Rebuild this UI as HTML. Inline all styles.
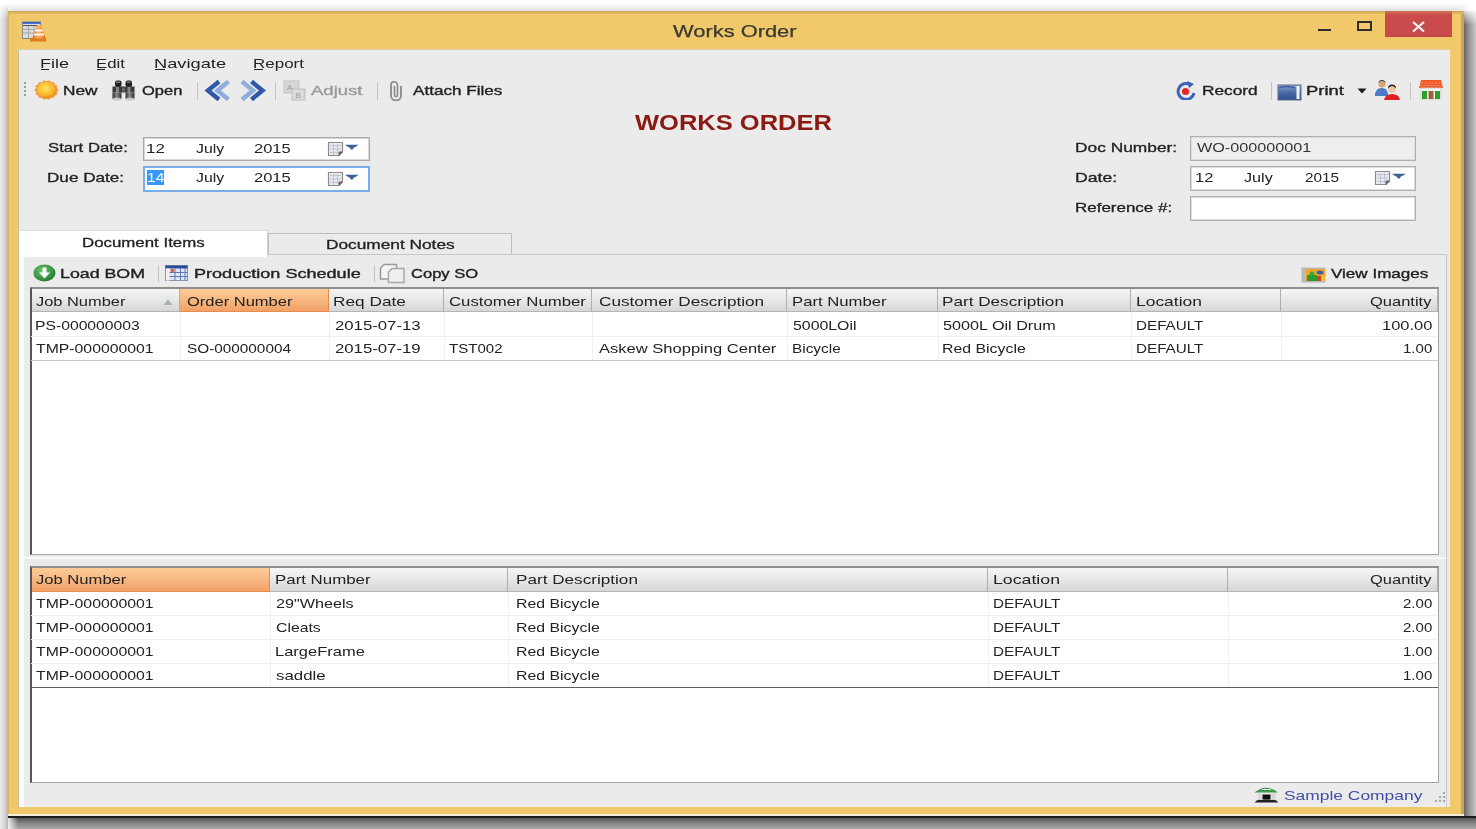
<!DOCTYPE html>
<html><head><meta charset="utf-8"><style>
html,body{margin:0;padding:0;width:1476px;height:829px;overflow:hidden;background:#fff;position:relative}
.t{position:absolute;white-space:pre;font-family:"Liberation Sans", sans-serif;transform-origin:0 0}
</style></head><body>
<div style="position:absolute;left:8px;top:11px;width:1456px;height:805px;box-shadow:0 0 9px 1px rgba(0,0,0,0.22)"></div>
<div style="position:absolute;left:1464px;top:11px;width:12px;height:818px;background:linear-gradient(90deg,#646464,#9a9a9a 45%,#c8c8c8);-webkit-mask-image:linear-gradient(rgba(0,0,0,0.15),#000 14px)"></div>
<div style="position:absolute;left:8px;top:816px;width:1468px;height:13px;background:linear-gradient(#1c1c1c,#1c1c1c 1.5px,#5a5a5a 2.5px,#8a8a8a 60%,#a8a8a8)"></div>
<div style="position:absolute;left:8px;top:818px;width:10px;height:11px;background:linear-gradient(90deg,rgba(255,255,255,0.85),rgba(255,255,255,0))"></div>
<div style="position:absolute;left:0;top:4px;width:8px;height:825px;background:linear-gradient(90deg,#ececec,#d8d8d8 55%,#b4b4b4);-webkit-mask-image:linear-gradient(rgba(0,0,0,0),#000 16px)"></div>
<div style="position:absolute;left:8px;top:11px;width:1456px;height:805px;background:#F1C96B;"></div>
<div style="position:absolute;left:8px;top:11px;width:1456px;height:3px;background:linear-gradient(#cfa955,#d6b05a 60%,#e8c064);"></div>
<div style="position:absolute;left:1461px;top:14px;width:3px;height:802px;background:#c9a650;"></div>
<div style="position:absolute;left:8px;top:14px;width:1px;height:801px;background:#dcb458;"></div>
<div style="position:absolute;left:8px;top:814px;width:1456px;height:2px;background:#f4ecd8;"></div>
<div style="position:absolute;left:18px;top:49px;width:1432px;height:758px;background:#EBEBEB;"></div>
<div style="position:absolute;left:18px;top:49px;width:1px;height:758px;background:#c8bc98;"></div>
<div style="position:absolute;left:18px;top:49px;width:1432px;height:1px;background:#dcd0a8;"></div>
<div style="position:absolute;left:1385px;top:11px;width:67px;height:26px;background:linear-gradient(#d0784e,#cc5a4c 3px,#C94B4C 4px,#C94B4C 24px,#c04446);"></div>
<svg style="position:absolute;left:1411px;top:21px" width="15" height="12" viewBox="0 0 15 12"><path d="M2 1 L13 10.5 M13 1 L2 10.5" stroke="#fff" stroke-width="2"/></svg>
<div style="position:absolute;left:1357px;top:21px;width:15px;height:10px;border:2px solid #2d2d2d;box-sizing:border-box;"></div>
<div style="position:absolute;left:1318px;top:29px;width:13px;height:2px;background:#2d2d2d;"></div>
<div style="position:absolute;left:197px;top:82px;width:1px;height:18px;background:#c4c4c4;"></div>
<div style="position:absolute;left:275px;top:82px;width:1px;height:18px;background:#c4c4c4;"></div>
<div style="position:absolute;left:377px;top:82px;width:1px;height:18px;background:#c4c4c4;"></div>
<div style="position:absolute;left:1271px;top:82px;width:1px;height:18px;background:#c4c4c4;"></div>
<div style="position:absolute;left:1410px;top:82px;width:1px;height:18px;background:#c4c4c4;"></div>
<div style="position:absolute;left:143px;top:137px;width:227px;height:24px;background:#fff;border:1px solid #a8a8a8;box-shadow:inset 0 0 0 1px #d8d8d8;box-sizing:border-box;"></div>
<div style="position:absolute;left:143px;top:166px;width:227px;height:26px;background:#fff;border:2px solid #79aee6;box-sizing:border-box;"></div>
<div style="position:absolute;left:1190px;top:136px;width:226px;height:25px;background:#EEEEEE;border:1px solid #b0b0b0;box-shadow:inset 0 0 0 1px #dcdcdc;box-sizing:border-box;"></div>
<div style="position:absolute;left:1190px;top:166px;width:226px;height:25px;background:#fff;border:1px solid #b0b0b0;box-shadow:inset 0 0 0 1px #dcdcdc;box-sizing:border-box;"></div>
<div style="position:absolute;left:1190px;top:196px;width:226px;height:25px;background:#fff;border:1px solid #b0b0b0;box-shadow:inset 0 0 0 1px #dcdcdc;box-sizing:border-box;"></div>
<div style="position:absolute;left:147px;top:170px;width:17px;height:15px;background:#3399ff;"></div>
<svg style="position:absolute;left:327px;top:141px" width="33" height="16" viewBox="0 0 33 16"><path d="M1.5 1.5 H15.5 V11 L12 14.5 H1.5 Z" fill="#e8eaee" stroke="#8e8a88" stroke-width="1.2" stroke-linejoin="round"/><path d="M3 4.5h11M3 8h11M3 11.5h8M6.5 3v11M10.5 3v10" stroke="#bcc4d0" stroke-width="1"/><path d="M12 14.5 L12 11 L15.5 11" fill="#6a6060" stroke="#6a6060" stroke-width="1"/><path d="M18 3.8 L31.5 3.8 Q30 5.5 27 6.5 L25.5 8.6 L24 8.6 L22.5 6.5 Q19.5 5.5 18 3.8 Z" fill="#3e5f98"/></svg>
<svg style="position:absolute;left:327px;top:171px" width="33" height="16" viewBox="0 0 33 16"><path d="M1.5 1.5 H15.5 V11 L12 14.5 H1.5 Z" fill="#e8eaee" stroke="#8e8a88" stroke-width="1.2" stroke-linejoin="round"/><path d="M3 4.5h11M3 8h11M3 11.5h8M6.5 3v11M10.5 3v10" stroke="#bcc4d0" stroke-width="1"/><path d="M12 14.5 L12 11 L15.5 11" fill="#6a6060" stroke="#6a6060" stroke-width="1"/><path d="M18 3.8 L31.5 3.8 Q30 5.5 27 6.5 L25.5 8.6 L24 8.6 L22.5 6.5 Q19.5 5.5 18 3.8 Z" fill="#3e5f98"/></svg>
<svg style="position:absolute;left:1374px;top:170px" width="33" height="16" viewBox="0 0 33 16"><path d="M1.5 1.5 H15.5 V11 L12 14.5 H1.5 Z" fill="#e8eaee" stroke="#8e8a88" stroke-width="1.2" stroke-linejoin="round"/><path d="M3 4.5h11M3 8h11M3 11.5h8M6.5 3v11M10.5 3v10" stroke="#bcc4d0" stroke-width="1"/><path d="M12 14.5 L12 11 L15.5 11" fill="#6a6060" stroke="#6a6060" stroke-width="1"/><path d="M18 3.8 L31.5 3.8 Q30 5.5 27 6.5 L25.5 8.6 L24 8.6 L22.5 6.5 Q19.5 5.5 18 3.8 Z" fill="#3e5f98"/></svg>
<div style="position:absolute;left:20px;top:254px;width:1427px;height:553px;background:#EBEBEB;border-top:1px solid #c8c8c8;border-right:1px solid #c8c8c8;box-sizing:border-box;"></div>
<div style="position:absolute;left:19px;top:256px;width:5px;height:551px;background:#fbfbfb;"></div>
<div style="position:absolute;left:19px;top:230px;width:249px;height:27px;background:#fff;border-top:1px solid #dedede;border-right:1px solid #d4d4d4;box-sizing:border-box;"></div>
<div style="position:absolute;left:268px;top:233px;width:244px;height:21px;background:#EBEBEB;border:1px solid #bdbdbd;border-bottom:none;box-sizing:border-box;"></div>
<div style="position:absolute;left:158px;top:265px;width:1px;height:17px;background:#c4c4c4;"></div>
<div style="position:absolute;left:374px;top:265px;width:1px;height:17px;background:#c4c4c4;"></div>
<div style="position:absolute;left:30px;top:287px;width:1409px;height:268px;background:#fff;border:1px solid #a4a4a4;border-top:2px solid #8e8e8e;border-left:2px solid #555;box-sizing:border-box;"></div>
<div style="position:absolute;left:32px;top:289px;width:148px;height:23px;background:linear-gradient(#f6f6f6,#e4e4e4 60%,#d6d6d6);border-right:1px solid #b0b0b0;border-bottom:1px solid #b4b4b4;box-sizing:border-box;"></div>
<div style="position:absolute;left:180px;top:289px;width:149px;height:23px;background:linear-gradient(#fccd97,#f7b882 50%,#f1a067);border-right:1px solid #ec8a4a;border-bottom:1px solid #e98c50;box-sizing:border-box;"></div>
<div style="position:absolute;left:329px;top:289px;width:115px;height:23px;background:linear-gradient(#f6f6f6,#e4e4e4 60%,#d6d6d6);border-right:1px solid #b0b0b0;border-bottom:1px solid #b4b4b4;box-sizing:border-box;"></div>
<div style="position:absolute;left:444px;top:289px;width:148px;height:23px;background:linear-gradient(#f6f6f6,#e4e4e4 60%,#d6d6d6);border-right:1px solid #b0b0b0;border-bottom:1px solid #b4b4b4;box-sizing:border-box;"></div>
<div style="position:absolute;left:592px;top:289px;width:195px;height:23px;background:linear-gradient(#f6f6f6,#e4e4e4 60%,#d6d6d6);border-right:1px solid #b0b0b0;border-bottom:1px solid #b4b4b4;box-sizing:border-box;"></div>
<div style="position:absolute;left:787px;top:289px;width:151px;height:23px;background:linear-gradient(#f6f6f6,#e4e4e4 60%,#d6d6d6);border-right:1px solid #b0b0b0;border-bottom:1px solid #b4b4b4;box-sizing:border-box;"></div>
<div style="position:absolute;left:938px;top:289px;width:193px;height:23px;background:linear-gradient(#f6f6f6,#e4e4e4 60%,#d6d6d6);border-right:1px solid #b0b0b0;border-bottom:1px solid #b4b4b4;box-sizing:border-box;"></div>
<div style="position:absolute;left:1131px;top:289px;width:150px;height:23px;background:linear-gradient(#f6f6f6,#e4e4e4 60%,#d6d6d6);border-right:1px solid #b0b0b0;border-bottom:1px solid #b4b4b4;box-sizing:border-box;"></div>
<div style="position:absolute;left:1281px;top:289px;width:157px;height:23px;background:linear-gradient(#f6f6f6,#e4e4e4 60%,#d6d6d6);border-right:1px solid #b0b0b0;border-bottom:1px solid #b4b4b4;box-sizing:border-box;"></div>
<svg style="position:absolute;left:163px;top:299px" width="10" height="6" viewBox="0 0 10 6"><path d="M0.5 6 L5 0.5 L9.5 6Z" fill="#a2b0b8"/></svg>
<div style="position:absolute;left:31px;top:336px;width:1407px;height:1px;background:#efefef;"></div>
<div style="position:absolute;left:31px;top:360px;width:1407px;height:1px;background:#efefef;"></div>
<div style="position:absolute;left:31px;top:360px;width:1407px;height:1px;background:#c8c8c8;"></div>
<div style="position:absolute;left:180px;top:312px;width:1px;height:48px;background:#f0f0f0;"></div>
<div style="position:absolute;left:329px;top:312px;width:1px;height:48px;background:#f0f0f0;"></div>
<div style="position:absolute;left:444px;top:312px;width:1px;height:48px;background:#f0f0f0;"></div>
<div style="position:absolute;left:592px;top:312px;width:1px;height:48px;background:#f0f0f0;"></div>
<div style="position:absolute;left:787px;top:312px;width:1px;height:48px;background:#f0f0f0;"></div>
<div style="position:absolute;left:938px;top:312px;width:1px;height:48px;background:#f0f0f0;"></div>
<div style="position:absolute;left:1131px;top:312px;width:1px;height:48px;background:#f0f0f0;"></div>
<div style="position:absolute;left:1281px;top:312px;width:1px;height:48px;background:#f0f0f0;"></div>
<div style="position:absolute;left:30px;top:566px;width:1409px;height:217px;background:#fff;border:1px solid #a4a4a4;border-top:2px solid #8e8e8e;border-left:2px solid #555;box-sizing:border-box;"></div>
<div style="position:absolute;left:20px;top:557px;width:1426px;height:2px;background:#f8f8f8;"></div>
<div style="position:absolute;left:32px;top:568px;width:238px;height:24px;background:linear-gradient(#fccd97,#f7b882 50%,#f1a067);border-right:1px solid #ec8a4a;border-bottom:1px solid #e98c50;box-sizing:border-box;"></div>
<div style="position:absolute;left:270px;top:568px;width:238px;height:24px;background:linear-gradient(#f6f6f6,#e4e4e4 60%,#d6d6d6);border-right:1px solid #b0b0b0;border-bottom:1px solid #b4b4b4;box-sizing:border-box;"></div>
<div style="position:absolute;left:508px;top:568px;width:480px;height:24px;background:linear-gradient(#f6f6f6,#e4e4e4 60%,#d6d6d6);border-right:1px solid #b0b0b0;border-bottom:1px solid #b4b4b4;box-sizing:border-box;"></div>
<div style="position:absolute;left:988px;top:568px;width:240px;height:24px;background:linear-gradient(#f6f6f6,#e4e4e4 60%,#d6d6d6);border-right:1px solid #b0b0b0;border-bottom:1px solid #b4b4b4;box-sizing:border-box;"></div>
<div style="position:absolute;left:1228px;top:568px;width:210px;height:24px;background:linear-gradient(#f6f6f6,#e4e4e4 60%,#d6d6d6);border-right:1px solid #b0b0b0;border-bottom:1px solid #b4b4b4;box-sizing:border-box;"></div>
<div style="position:absolute;left:31px;top:615px;width:1407px;height:1px;background:#efefef;"></div>
<div style="position:absolute;left:31px;top:639px;width:1407px;height:1px;background:#efefef;"></div>
<div style="position:absolute;left:31px;top:663px;width:1407px;height:1px;background:#efefef;"></div>
<div style="position:absolute;left:31px;top:687px;width:1407px;height:1px;background:#5e5e5e;"></div>
<div style="position:absolute;left:270px;top:592px;width:1px;height:95px;background:#f0f0f0;"></div>
<div style="position:absolute;left:508px;top:592px;width:1px;height:95px;background:#f0f0f0;"></div>
<div style="position:absolute;left:988px;top:592px;width:1px;height:95px;background:#f0f0f0;"></div>
<div style="position:absolute;left:1228px;top:592px;width:1px;height:95px;background:#f0f0f0;"></div>
<svg style="position:absolute;left:21px;top:20px" width="27" height="22" viewBox="0 0 27 22">
<defs><linearGradient id="cone" x1="0" x2="1"><stop offset="0" stop-color="#e8701a"/><stop offset="0.5" stop-color="#fbb46a"/><stop offset="1" stop-color="#e06a14"/></linearGradient></defs>
<rect x="1.5" y="2" width="18" height="16.5" fill="#dcdcdc" stroke="#8a8a8a" stroke-width="1"/>
<rect x="1.5" y="2" width="18" height="1.8" fill="#2f5fc8"/>
<rect x="2" y="5" width="17" height="1" fill="#555"/>
<path d="M2 9.5h17M2 13h17M7.5 6v12M13 6v12" stroke="#a8a8a8" stroke-width="1"/>
<path d="M16 5 L20 5 L25 19 L11 19 Z" fill="url(#cone)"/>
<rect x="9" y="18.5" width="16" height="3" fill="#e27a22"/>
<path d="M14.2 10.5 L21.8 10.5 M13 14.5 L23 14.5" stroke="#fff" stroke-width="1.8" opacity="0.9"/>
</svg>
<svg style="position:absolute;left:23px;top:81px" width="4" height="17" viewBox="0 0 4 17"><rect x="1" y="1" width="2" height="2" fill="#9a9a9a"/><rect x="1" y="5" width="2" height="2" fill="#9a9a9a"/><rect x="1" y="9" width="2" height="2" fill="#9a9a9a"/><rect x="1" y="13" width="2" height="2" fill="#9a9a9a"/></svg>
<svg style="position:absolute;left:34px;top:80px" width="25" height="20" viewBox="0 0 25 20">
<defs><radialGradient id="sun" cx="0.45" cy="0.4" r="0.6"><stop offset="0" stop-color="#ffe45a"/><stop offset="0.7" stop-color="#f8b530"/><stop offset="1" stop-color="#ee8a1e"/></radialGradient></defs>
<polygon points="24.70,10.00 22.83,11.93 23.49,14.34 20.79,15.42 20.11,17.82 17.10,17.83 15.21,19.75 12.50,18.69 9.79,19.75 7.90,17.83 4.89,17.82 4.21,15.42 1.51,14.34 2.17,11.93 0.30,10.00 2.17,8.07 1.51,5.66 4.21,4.58 4.89,2.18 7.90,2.17 9.79,0.25 12.50,1.31 15.21,0.25 17.10,2.17 20.11,2.18 20.79,4.58 23.49,5.66 22.83,8.07" fill="#f29a3a"/>
<ellipse cx="12.5" cy="10" rx="10" ry="8.2" fill="url(#sun)"/>
</svg>
<svg style="position:absolute;left:112px;top:80px" width="23" height="21" viewBox="0 0 23 21">
<defs><linearGradient id="bin" x1="0" x2="1"><stop offset="0" stop-color="#2e2e2e"/><stop offset="0.45" stop-color="#8a8a8a"/><stop offset="1" stop-color="#2e2e2e"/></linearGradient></defs>
<rect x="3" y="0.5" width="6.5" height="6.5" rx="2" fill="#1e1e1e"/>
<rect x="13.5" y="0.5" width="6.5" height="6.5" rx="2" fill="#1e1e1e"/>
<rect x="4" y="1.5" width="4" height="1.5" fill="#777"/>
<rect x="14.5" y="1.5" width="4" height="1.5" fill="#777"/>
<rect x="0.5" y="6.5" width="22" height="6" fill="#3a3a3a"/>
<rect x="4" y="7" width="3" height="5" fill="#888"/>
<rect x="15.5" y="7" width="3" height="5" fill="#888"/>
<rect x="10" y="7.5" width="3" height="4" fill="#666"/>
<rect x="0.5" y="12.5" width="9" height="6.5" fill="url(#bin)"/>
<rect x="13.5" y="12.5" width="9" height="6.5" fill="url(#bin)"/>
<ellipse cx="5" cy="19" rx="4.2" ry="1.6" fill="#c8c8c8"/>
<ellipse cx="18" cy="19" rx="4.2" ry="1.6" fill="#c8c8c8"/>
</svg>
<svg style="position:absolute;left:204px;top:80px" width="28" height="21" viewBox="0 0 28 21">
<path d="M15 1.5 L4 10.5 L15 19.5" fill="none" stroke="#2f58a8" stroke-width="4.5" stroke-linejoin="miter"/>
<path d="M24.5 1.5 L13.5 10.5 L24.5 19.5" fill="none" stroke="#8faee0" stroke-width="4.5" stroke-linejoin="miter"/>
</svg>
<svg style="position:absolute;left:238px;top:80px" width="28" height="21" viewBox="0 0 28 21">
<path d="M4 1.5 L15 10.5 L4 19.5" fill="none" stroke="#8faee0" stroke-width="4.5"/>
<path d="M13.5 1.5 L24.5 10.5 L13.5 19.5" fill="none" stroke="#2f58a8" stroke-width="4.5"/>
</svg>
<svg style="position:absolute;left:283px;top:80px" width="24" height="21" viewBox="0 0 24 21">
<rect x="1" y="1" width="15" height="12" fill="#d6d6d6" stroke="#c4c4c4" stroke-width="1"/>
<rect x="9" y="9" width="13" height="11" fill="#dadada" stroke="#c0c0c0" stroke-width="1"/>
<text x="4" y="10" font-family="Liberation Sans" font-size="8" fill="#9a9a9a">A</text>
<text x="12.5" y="18" font-family="Liberation Sans" font-size="8" fill="#9a9a9a">B</text>
</svg>
<svg style="position:absolute;left:388px;top:81px" width="16" height="20" viewBox="0 0 16 20">
<path d="M3 4 V14.5 A5 5 0 0 0 13 14.5 V5" fill="none" stroke="#8a8a8a" stroke-width="1.8"/>
<path d="M3 4 A3 3 0 0 1 9.5 4 V14 A1.5 1.5 0 0 1 6.5 14 V5" fill="none" stroke="#8a8a8a" stroke-width="1.6"/>
</svg>
<svg style="position:absolute;left:1173px;top:79px" width="25" height="21" viewBox="0 0 25 21">
<path d="M18.5 6.5 A8 8 0 1 0 21 14" fill="none" stroke="#3d63b8" stroke-width="3"/>
<path d="M14 2 L21 5 L16 9 Z" fill="#3d63b8"/>
<circle cx="12.5" cy="12.5" r="3.6" fill="#e02a2a"/>
</svg>
<svg style="position:absolute;left:1277px;top:84px" width="26" height="17" viewBox="0 0 26 17">
<defs><linearGradient id="pr" x1="0" y1="0" x2="0" y2="1"><stop offset="0" stop-color="#8ba8d8"/><stop offset="0.5" stop-color="#4a6aa8"/><stop offset="1" stop-color="#2e4c8e"/></linearGradient></defs>
<rect x="1" y="1" width="23" height="15" fill="url(#pr)" stroke="#5e6e8e" stroke-width="1"/>
<rect x="19.5" y="2" width="3" height="13" fill="#f4f4f4"/>
<path d="M2 4 Q10 1 18 4" stroke="#3a5a9a" stroke-width="1.5" fill="none"/>
</svg>
<svg style="position:absolute;left:1357px;top:88px" width="10" height="6" viewBox="0 0 10 6"><path d="M0.5 0.5 L9.5 0.5 L5 5.5 Z" fill="#1e1e1e"/></svg>
<svg style="position:absolute;left:1374px;top:79px" width="28" height="22" viewBox="0 0 28 22">
<circle cx="8" cy="5" r="3.6" fill="#d8a878"/>
<path d="M4.5 4 Q8 -0.5 11.5 4 Q11 1 8 1 Q5 1 4.5 4Z" fill="#2a2a2a"/>
<path d="M1 17 Q1 9 8 9 Q14 9 14 17 Z" fill="#4a7ac8"/>
<circle cx="18" cy="10" r="3.8" fill="#f0c8a0"/>
<path d="M14 9.5 Q14 5.5 18 5.5 Q22 5.5 22 9.5 Q20 7 18 7 Q16 7 14 9.5Z" fill="#2a2a2a"/>
<path d="M10 21 Q11 15 18 15 Q25 15 26 21 Z" fill="#e02020"/>
</svg>
<svg style="position:absolute;left:1418px;top:79px" width="26" height="22" viewBox="0 0 26 22">
<path d="M3 1 L23 1 L25 9 L1 9 Z" fill="#f05a28"/>
<path d="M3 4h20M2 6.5h22" stroke="#ffb090" stroke-width="0.7" stroke-dasharray="2 1.5"/>
<rect x="3" y="9" width="20" height="11" fill="#f4f4f4" stroke="#c8c8c8" stroke-width="0.8"/>
<rect x="4" y="12" width="5" height="8" fill="#2e9e2e"/>
<rect x="10.5" y="12" width="5" height="8" fill="#a0603a"/>
<rect x="17" y="12" width="5" height="8" fill="#2e9e2e"/>
</svg>
<svg style="position:absolute;left:33px;top:264px" width="23" height="18" viewBox="0 0 23 18">
<defs><radialGradient id="gb" cx="0.4" cy="0.35" r="0.7"><stop offset="0" stop-color="#6cc46c"/><stop offset="1" stop-color="#1e7a2e"/></radialGradient></defs>
<ellipse cx="11.5" cy="9" rx="11" ry="8.5" fill="url(#gb)"/>
<path d="M9.5 3.5 h4 v5 h3.5 l-5.5 6 l-5.5 -6 h3.5 Z" fill="#fff"/>
</svg>
<svg style="position:absolute;left:165px;top:265px" width="23" height="16" viewBox="0 0 23 16">
<rect x="0.5" y="0.5" width="22" height="15" fill="#dfe6f0" stroke="#8a96aa" stroke-width="1"/>
<rect x="0.5" y="0.5" width="22" height="3" fill="#2c4a9a"/>
<rect x="1" y="3.5" width="3.5" height="12" fill="#f0f0f0"/>
<path d="M4.5 7.5h18M4.5 11.5h18M10 3.5v12M15.5 3.5v12M20 3.5v12" stroke="#5a78b8" stroke-width="1"/>
<circle cx="7.3" cy="5.6" r="1.8" fill="#f05a1e"/>
</svg>
<svg style="position:absolute;left:379px;top:263px" width="27" height="21" viewBox="0 0 27 21">
<path d="M5 1.5 H17.5 V16 H1.5 V5 Z" fill="#f6f6f6" stroke="#9a9a9a" stroke-width="1.5"/>
<path d="M13 5.5 H25 V19.5 H9.5 V9 Z" fill="#efefef" stroke="#a8a8a8" stroke-width="1.5"/>
</svg>
<svg style="position:absolute;left:1301px;top:267px" width="25" height="16" viewBox="0 0 25 16">
<rect x="0.5" y="0.5" width="24" height="15" fill="#b8b8b8"/>
<rect x="5" y="2" width="19" height="12" fill="#f6a624"/>
<path d="M9 5 Q11 3.5 13 5 L13.5 14 L7 14 Z" fill="#3ea83e"/>
<rect x="6" y="8" width="10" height="6" fill="#2e9a2e"/>
<ellipse cx="19" cy="5.5" rx="3.5" ry="2" fill="#3a62b0"/>
<rect x="16" y="9" width="4" height="5" fill="#d8401a"/>
<rect x="20" y="9" width="4" height="5" fill="#f0c030"/>
</svg>
<svg style="position:absolute;left:1253px;top:785px" width="27" height="19" viewBox="0 0 27 19">
<path d="M1.5 7.5 Q13 -2 25 7.5 Z" fill="#3a9a4a"/>
<path d="M9 4.5 h9" stroke="#e8ffe8" stroke-width="1"/>
<rect x="4.5" y="8.5" width="4" height="6" fill="#d8d8d8"/>
<rect x="18.5" y="8.5" width="4" height="6" fill="#d8d8d8"/>
<rect x="9.5" y="9.5" width="8" height="5" fill="#111"/>
<path d="M1.5 17.5 Q4 14 8 15 L13 14.5 L19 15 Q23 14 25.5 17.5 Z" fill="#222"/>
</svg>
<svg style="position:absolute;left:1430px;top:791px" width="17" height="13" viewBox="0 0 17 13"><rect x="13" y="1" width="2" height="2" fill="#a8a8a8"/><rect x="13" y="5" width="2" height="2" fill="#a8a8a8"/><rect x="9" y="5" width="2" height="2" fill="#a8a8a8"/><rect x="13" y="9" width="2" height="2" fill="#a8a8a8"/><rect x="9" y="9" width="2" height="2" fill="#a8a8a8"/><rect x="5" y="9" width="2" height="2" fill="#a8a8a8"/></svg>
<div style="position:absolute;left:41px;top:69px;width:8px;height:1px;background:#222;"></div>
<div style="position:absolute;left:97px;top:69px;width:8px;height:1px;background:#222;"></div>
<div style="position:absolute;left:155px;top:69px;width:10px;height:1px;background:#222;"></div>
<div style="position:absolute;left:254px;top:69px;width:9px;height:1px;background:#222;"></div>
<span class="t" style="left:673.00px;top:23.00px;font-size:17px;line-height:17px;font-weight:400;color:#3a3a32;transform:scaleX(1.2867);-webkit-text-stroke:0.25px currentColor;">Works Order</span>
<span class="t" style="left:39.67px;top:57.00px;font-size:13.5px;line-height:13.5px;font-weight:400;color:#222;transform:scaleX(1.3337);">File</span>
<span class="t" style="left:95.76px;top:57.00px;font-size:13.5px;line-height:13.5px;font-weight:400;color:#222;transform:scaleX(1.2438);">Edit</span>
<span class="t" style="left:153.65px;top:57.00px;font-size:13.5px;line-height:13.5px;font-weight:400;color:#222;transform:scaleX(1.3520);">Navigate</span>
<span class="t" style="left:252.74px;top:57.00px;font-size:13.5px;line-height:13.5px;font-weight:400;color:#222;transform:scaleX(1.2573);">Report</span>
<span class="t" style="left:63.17px;top:84.00px;font-size:13px;line-height:13px;font-weight:400;color:#222;transform:scaleX(1.3272);-webkit-text-stroke:0.35px currentColor;">New</span>
<span class="t" style="left:142.00px;top:84.00px;font-size:13px;line-height:13px;font-weight:400;color:#222;transform:scaleX(1.2670);-webkit-text-stroke:0.35px currentColor;">Open</span>
<span class="t" style="left:311.00px;top:84.00px;font-size:13px;line-height:13px;font-weight:400;color:#9a9a9a;transform:scaleX(1.4239);-webkit-text-stroke:0.35px currentColor;">Adjust</span>
<span class="t" style="left:413.00px;top:84.00px;font-size:13px;line-height:13px;font-weight:400;color:#222;transform:scaleX(1.3155);-webkit-text-stroke:0.35px currentColor;">Attach Files</span>
<span class="t" style="left:1201.67px;top:84.00px;font-size:13px;line-height:13px;font-weight:400;color:#222;transform:scaleX(1.3275);-webkit-text-stroke:0.35px currentColor;">Record</span>
<span class="t" style="left:1305.58px;top:84.00px;font-size:13px;line-height:13px;font-weight:400;color:#222;transform:scaleX(1.4166);-webkit-text-stroke:0.35px currentColor;">Print</span>
<span class="t" style="left:635.00px;top:112.00px;font-size:22px;line-height:22px;font-weight:700;color:#8B1A12;transform:scaleX(1.1588);">WORKS ORDER</span>
<span class="t" style="left:48.00px;top:141.00px;font-size:13px;line-height:13px;font-weight:400;color:#222;transform:scaleX(1.2840);-webkit-text-stroke:0.3px currentColor;">Start Date:</span>
<span class="t" style="left:46.68px;top:171.00px;font-size:13px;line-height:13px;font-weight:400;color:#222;transform:scaleX(1.3176);-webkit-text-stroke:0.3px currentColor;">Due Date:</span>
<span class="t" style="left:1075.17px;top:141.00px;font-size:13px;line-height:13px;font-weight:400;color:#222;transform:scaleX(1.3339);-webkit-text-stroke:0.3px currentColor;">Doc Number:</span>
<span class="t" style="left:1075.14px;top:171.00px;font-size:13px;line-height:13px;font-weight:400;color:#222;transform:scaleX(1.3578);-webkit-text-stroke:0.3px currentColor;">Date:</span>
<span class="t" style="left:1075.20px;top:201.00px;font-size:13px;line-height:13px;font-weight:400;color:#222;transform:scaleX(1.3046);-webkit-text-stroke:0.3px currentColor;">Reference #:</span>
<span class="t" style="left:145.74px;top:142.00px;font-size:13.5px;line-height:13.5px;font-weight:400;color:#222;transform:scaleX(1.2585);">12</span>
<span class="t" style="left:195.50px;top:142.00px;font-size:13.5px;line-height:13.5px;font-weight:400;color:#222;transform:scaleX(1.1749);">July</span>
<span class="t" style="left:254.00px;top:142.00px;font-size:13.5px;line-height:13.5px;font-weight:400;color:#222;transform:scaleX(1.2193);">2015</span>
<span class="t" style="left:147.00px;top:171.00px;font-size:13px;line-height:13px;font-weight:400;color:#fff;transform:scaleX(1.1947);">14</span>
<span class="t" style="left:195.50px;top:171.00px;font-size:13.5px;line-height:13.5px;font-weight:400;color:#222;transform:scaleX(1.1749);">July</span>
<span class="t" style="left:254.00px;top:171.00px;font-size:13.5px;line-height:13.5px;font-weight:400;color:#222;transform:scaleX(1.2193);">2015</span>
<span class="t" style="left:1196.50px;top:141.00px;font-size:13px;line-height:13px;font-weight:400;color:#333;transform:scaleX(1.2452);">WO-000000001</span>
<span class="t" style="left:1195.28px;top:171.00px;font-size:13.5px;line-height:13.5px;font-weight:400;color:#222;transform:scaleX(1.2215);">12</span>
<span class="t" style="left:1244.00px;top:171.00px;font-size:13.5px;line-height:13.5px;font-weight:400;color:#222;transform:scaleX(1.1955);">July</span>
<span class="t" style="left:1304.50px;top:171.00px;font-size:13.5px;line-height:13.5px;font-weight:400;color:#222;transform:scaleX(1.1347);">2015</span>
<span class="t" style="left:81.70px;top:236.00px;font-size:13px;line-height:13px;font-weight:400;color:#222;transform:scaleX(1.2959);-webkit-text-stroke:0.3px currentColor;">Document Items</span>
<span class="t" style="left:325.67px;top:238.00px;font-size:13px;line-height:13px;font-weight:400;color:#222;transform:scaleX(1.3289);-webkit-text-stroke:0.3px currentColor;">Document Notes</span>
<span class="t" style="left:60.13px;top:267.00px;font-size:13px;line-height:13px;font-weight:400;color:#222;transform:scaleX(1.3678);-webkit-text-stroke:0.35px currentColor;">Load BOM</span>
<span class="t" style="left:194.11px;top:267.00px;font-size:13px;line-height:13px;font-weight:400;color:#222;transform:scaleX(1.3896);-webkit-text-stroke:0.35px currentColor;">Production Schedule</span>
<span class="t" style="left:410.50px;top:267.00px;font-size:13px;line-height:13px;font-weight:400;color:#222;transform:scaleX(1.2730);-webkit-text-stroke:0.35px currentColor;">Copy SO</span>
<span class="t" style="left:1331.00px;top:267.00px;font-size:13px;line-height:13px;font-weight:400;color:#222;transform:scaleX(1.3122);-webkit-text-stroke:0.35px currentColor;">View Images</span>
<span class="t" style="left:36.00px;top:295.00px;font-size:13.5px;line-height:13.5px;font-weight:400;color:#222;transform:scaleX(1.2156);">Job Number</span>
<span class="t" style="left:186.50px;top:295.00px;font-size:13.5px;line-height:13.5px;font-weight:400;color:#222;transform:scaleX(1.2215);">Order Number</span>
<span class="t" style="left:333.22px;top:295.00px;font-size:13.5px;line-height:13.5px;font-weight:400;color:#222;transform:scaleX(1.2787);">Req Date</span>
<span class="t" style="left:449.00px;top:295.00px;font-size:13.5px;line-height:13.5px;font-weight:400;color:#222;transform:scaleX(1.2411);">Customer Number</span>
<span class="t" style="left:598.50px;top:295.00px;font-size:13.5px;line-height:13.5px;font-weight:400;color:#222;transform:scaleX(1.2724);">Customer Description</span>
<span class="t" style="left:791.76px;top:295.00px;font-size:13.5px;line-height:13.5px;font-weight:400;color:#222;transform:scaleX(1.2364);">Part Number</span>
<span class="t" style="left:941.73px;top:295.00px;font-size:13.5px;line-height:13.5px;font-weight:400;color:#222;transform:scaleX(1.2695);">Part Description</span>
<span class="t" style="left:1135.71px;top:295.00px;font-size:13.5px;line-height:13.5px;font-weight:400;color:#222;transform:scaleX(1.2921);">Location</span>
<span class="t" style="left:1370.00px;top:295.00px;font-size:13px;line-height:13px;font-weight:400;color:#222;transform:scaleX(1.2675);">Quantity</span>
<span class="t" style="left:34.84px;top:319.00px;font-size:13.5px;line-height:13.5px;font-weight:400;color:#222;transform:scaleX(1.1629);">PS-000000003</span>
<span class="t" style="left:335.00px;top:319.00px;font-size:13.5px;line-height:13.5px;font-weight:400;color:#222;transform:scaleX(1.2400);">2015-07-13</span>
<span class="t" style="left:793.00px;top:319.00px;font-size:13.5px;line-height:13.5px;font-weight:400;color:#222;transform:scaleX(1.1750);">5000LOil</span>
<span class="t" style="left:943.00px;top:319.00px;font-size:13.5px;line-height:13.5px;font-weight:400;color:#222;transform:scaleX(1.1984);">5000L Oil Drum</span>
<span class="t" style="left:1135.87px;top:319.00px;font-size:13.5px;line-height:13.5px;font-weight:400;color:#222;transform:scaleX(1.1279);">DEFAULT</span>
<span class="t" style="left:1382.00px;top:319.00px;font-size:13px;line-height:13px;font-weight:400;color:#222;transform:scaleX(1.2648);">100.00</span>
<span class="t" style="left:36.00px;top:342.00px;font-size:13.5px;line-height:13.5px;font-weight:400;color:#222;transform:scaleX(1.1693);">TMP-000000001</span>
<span class="t" style="left:186.50px;top:342.00px;font-size:13.5px;line-height:13.5px;font-weight:400;color:#222;transform:scaleX(1.1351);">SO-000000004</span>
<span class="t" style="left:335.00px;top:342.00px;font-size:13.5px;line-height:13.5px;font-weight:400;color:#222;transform:scaleX(1.2400);">2015-07-19</span>
<span class="t" style="left:449.00px;top:342.00px;font-size:13.5px;line-height:13.5px;font-weight:400;color:#222;transform:scaleX(1.1155);">TST002</span>
<span class="t" style="left:598.50px;top:342.00px;font-size:13.5px;line-height:13.5px;font-weight:400;color:#222;transform:scaleX(1.2247);">Askew Shopping Center</span>
<span class="t" style="left:791.86px;top:342.00px;font-size:13.5px;line-height:13.5px;font-weight:400;color:#222;transform:scaleX(1.1393);">Bicycle</span>
<span class="t" style="left:941.82px;top:342.00px;font-size:13.5px;line-height:13.5px;font-weight:400;color:#222;transform:scaleX(1.1753);">Red Bicycle</span>
<span class="t" style="left:1135.87px;top:342.00px;font-size:13.5px;line-height:13.5px;font-weight:400;color:#222;transform:scaleX(1.1279);">DEFAULT</span>
<span class="t" style="left:1403.00px;top:342.00px;font-size:13px;line-height:13px;font-weight:400;color:#222;transform:scaleX(1.1567);">1.00</span>
<span class="t" style="left:36.00px;top:573.00px;font-size:13.5px;line-height:13.5px;font-weight:400;color:#222;transform:scaleX(1.2291);">Job Number</span>
<span class="t" style="left:274.75px;top:573.00px;font-size:13.5px;line-height:13.5px;font-weight:400;color:#222;transform:scaleX(1.2495);">Part Number</span>
<span class="t" style="left:516.23px;top:573.00px;font-size:13.5px;line-height:13.5px;font-weight:400;color:#222;transform:scaleX(1.2695);">Part Description</span>
<span class="t" style="left:992.69px;top:573.00px;font-size:13.5px;line-height:13.5px;font-weight:400;color:#222;transform:scaleX(1.3123);">Location</span>
<span class="t" style="left:1370.00px;top:573.00px;font-size:13px;line-height:13px;font-weight:400;color:#222;transform:scaleX(1.2675);">Quantity</span>
<span class="t" style="left:36.00px;top:597.00px;font-size:13.5px;line-height:13.5px;font-weight:400;color:#222;transform:scaleX(1.1693);">TMP-000000001</span>
<span class="t" style="left:276.00px;top:597.00px;font-size:13.5px;line-height:13.5px;font-weight:400;color:#222;transform:scaleX(1.1986);">29"Wheels</span>
<span class="t" style="left:516.32px;top:597.00px;font-size:13.5px;line-height:13.5px;font-weight:400;color:#222;transform:scaleX(1.1753);">Red Bicycle</span>
<span class="t" style="left:992.87px;top:597.00px;font-size:13.5px;line-height:13.5px;font-weight:400;color:#222;transform:scaleX(1.1279);">DEFAULT</span>
<span class="t" style="left:1403.00px;top:597.00px;font-size:13px;line-height:13px;font-weight:400;color:#222;transform:scaleX(1.1567);">2.00</span>
<span class="t" style="left:36.00px;top:621.00px;font-size:13.5px;line-height:13.5px;font-weight:400;color:#222;transform:scaleX(1.1693);">TMP-000000001</span>
<span class="t" style="left:276.00px;top:621.00px;font-size:13.5px;line-height:13.5px;font-weight:400;color:#222;transform:scaleX(1.1684);">Cleats</span>
<span class="t" style="left:516.32px;top:621.00px;font-size:13.5px;line-height:13.5px;font-weight:400;color:#222;transform:scaleX(1.1753);">Red Bicycle</span>
<span class="t" style="left:992.87px;top:621.00px;font-size:13.5px;line-height:13.5px;font-weight:400;color:#222;transform:scaleX(1.1279);">DEFAULT</span>
<span class="t" style="left:1403.00px;top:621.00px;font-size:13px;line-height:13px;font-weight:400;color:#222;transform:scaleX(1.1567);">2.00</span>
<span class="t" style="left:36.00px;top:645.00px;font-size:13.5px;line-height:13.5px;font-weight:400;color:#222;transform:scaleX(1.1693);">TMP-000000001</span>
<span class="t" style="left:274.78px;top:645.00px;font-size:13.5px;line-height:13.5px;font-weight:400;color:#222;transform:scaleX(1.2218);">LargeFrame</span>
<span class="t" style="left:516.32px;top:645.00px;font-size:13.5px;line-height:13.5px;font-weight:400;color:#222;transform:scaleX(1.1753);">Red Bicycle</span>
<span class="t" style="left:992.87px;top:645.00px;font-size:13.5px;line-height:13.5px;font-weight:400;color:#222;transform:scaleX(1.1279);">DEFAULT</span>
<span class="t" style="left:1403.00px;top:645.00px;font-size:13px;line-height:13px;font-weight:400;color:#222;transform:scaleX(1.1567);">1.00</span>
<span class="t" style="left:36.00px;top:669.00px;font-size:13.5px;line-height:13.5px;font-weight:400;color:#222;transform:scaleX(1.1693);">TMP-000000001</span>
<span class="t" style="left:276.00px;top:669.00px;font-size:13.5px;line-height:13.5px;font-weight:400;color:#222;transform:scaleX(1.2477);">saddle</span>
<span class="t" style="left:516.32px;top:669.00px;font-size:13.5px;line-height:13.5px;font-weight:400;color:#222;transform:scaleX(1.1753);">Red Bicycle</span>
<span class="t" style="left:992.87px;top:669.00px;font-size:13.5px;line-height:13.5px;font-weight:400;color:#222;transform:scaleX(1.1279);">DEFAULT</span>
<span class="t" style="left:1403.00px;top:669.00px;font-size:13px;line-height:13px;font-weight:400;color:#222;transform:scaleX(1.1567);">1.00</span>
<span class="t" style="left:1283.50px;top:789.00px;font-size:13px;line-height:13px;font-weight:400;color:#3e50a8;transform:scaleX(1.3388);">Sample Company</span>
</body></html>
